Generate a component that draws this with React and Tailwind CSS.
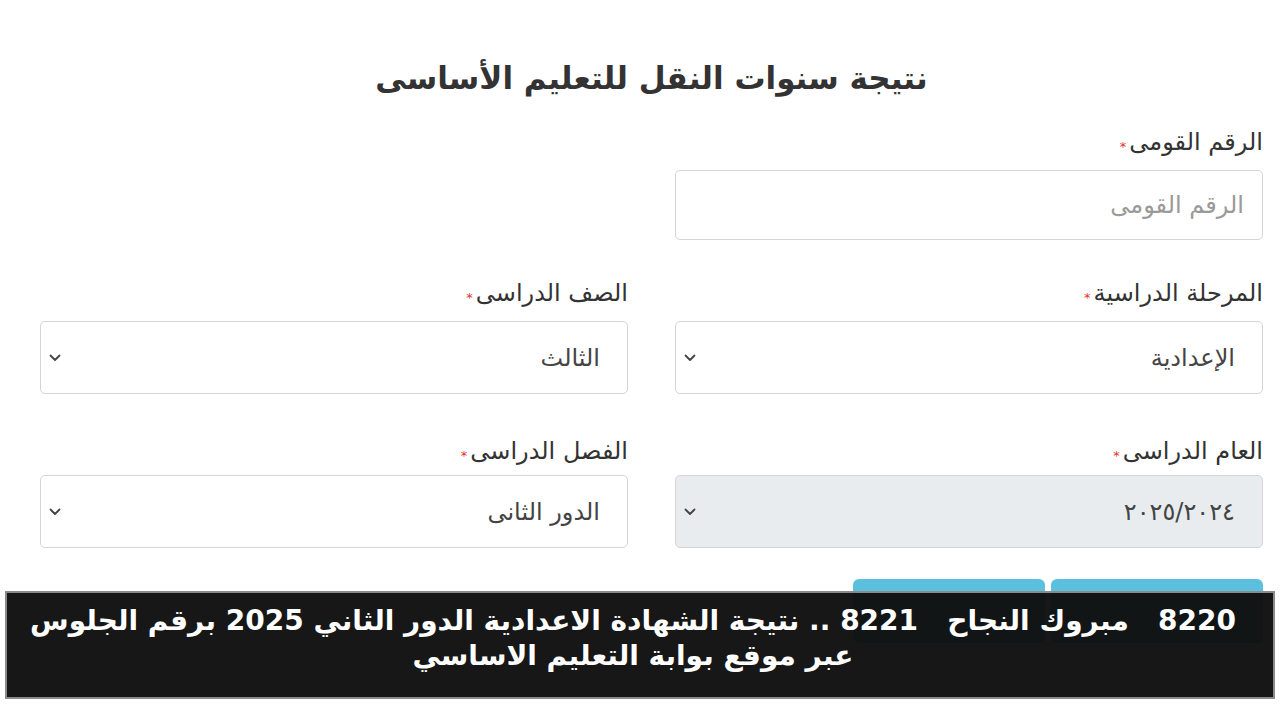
import React from "react";

const font = { fontFamily: '"DejaVu Sans", "Noto Sans", sans-serif' };

function Chevron() {
  return (
    <svg width="12" height="8" viewBox="0 0 12 8" className="shrink-0">
      <path d="M1.5 1.5 L6 6 L10.5 1.5" fill="none" stroke="#444" strokeWidth="1.8" strokeLinecap="round" strokeLinejoin="round" />
    </svg>
  );
}

function Label({ children }) {
  return (
    <div className="flex items-end gap-[3px] h-[32px] text-[24px] leading-none text-[#333]">
      <span>{children}</span>
      <span className="text-[#e3342f] text-[13px] leading-none mb-[1px]">*</span>
    </div>
  );
}

function SelectBox({ value, gray }) {
  return (
    <div className={`h-[73px] rounded-[5px] border border-[#d4d4d4] flex items-center justify-between pr-[27px] pl-[8px] ${gray ? "bg-[#e9ecef]" : "bg-white"}`}>
      <span className="text-[24px] text-[#444] leading-none">{value}</span>
      <Chevron />
    </div>
  );
}

export default function App() {
  return (
    <div dir="rtl" className="relative w-[1280px] h-[720px] bg-white overflow-hidden" style={font}>
      <div className="pr-[17px] pl-[40px]">
        <h1 className="text-center text-[31px] font-bold text-[#333] pt-[54px] leading-[48px]">
          نتيجة سنوات النقل للتعليم الأساسى
        </h1>
        <div className="grid grid-cols-2 gap-x-[47px] mt-[20px]">
          <div>
            <Label>الرقم القومى</Label>
            <div className="mt-[16px] h-[70px] rounded-[5px] border border-[#d4d4d4] flex items-center pr-[18px]">
              <span className="text-[24px] text-[#9a9a9a] leading-none">الرقم القومى</span>
            </div>
          </div>
          <div />
          <div className="mt-[33px]">
            <Label>المرحلة الدراسية</Label>
            <div className="mt-[16px]"><SelectBox value="الإعدادية" /></div>
          </div>
          <div className="mt-[33px]">
            <Label>الصف الدراسى</Label>
            <div className="mt-[16px]"><SelectBox value="الثالث" /></div>
          </div>
          <div className="mt-[37px]">
            <Label>العام الدراسى</Label>
            <div className="mt-[12px]"><SelectBox value="٢٠٢٥/٢٠٢٤" gray /></div>
          </div>
          <div className="mt-[37px]">
            <Label>الفصل الدراسى</Label>
            <div className="mt-[12px]"><SelectBox value="الدور الثانى" /></div>
          </div>
        </div>
        <div className="flex gap-[6px] mt-[31px]">
          <div className="w-[212px] h-[64px] rounded-[6px] bg-[#5bc0de]" />
          <div className="w-[192px] h-[64px] rounded-[6px] bg-[#5bc0de]" />
        </div>
      </div>

      <div className="absolute left-[5px] right-[5px] top-[591px] h-[108px] bg-[#101010]/[0.97] border-2 border-[#8a8a8a] pt-[10px] pr-[14px]">
        <p className="text-center text-white font-bold text-[28px] leading-[35px] whitespace-nowrap">
          8220&nbsp;&nbsp; مبروك النجاح &nbsp; 8221 .. نتيجة الشهادة الاعدادية الدور الثاني 2025 برقم الجلوس
          <br />
          عبر موقع بوابة التعليم الاساسي
        </p>
      </div>
    </div>
  );
}
